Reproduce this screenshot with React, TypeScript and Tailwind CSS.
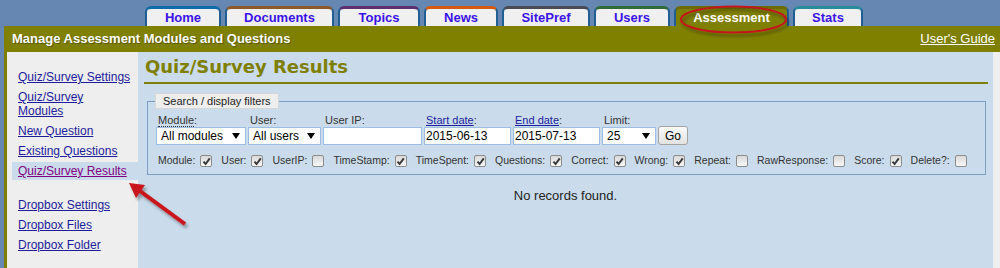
import React from "react";

const tabs = [
  { label: "Home", cls: "w-[76px] border-t-[#0e6aa8]" },
  { label: "Documents", cls: "w-[109px] border-t-[#8b5a2b]" },
  { label: "Topics", cls: "w-[82px] border-t-[#5c2f6e]" },
  { label: "News", cls: "w-[74px] border-t-[#d35a0e]" },
  { label: "SitePref", cls: "w-[88px] border-t-[#4a4a55]" },
  { label: "Users", cls: "w-[76px] border-t-[#2f6b3a]" },
  { label: "Assessment", cls: "w-[115px] border-t-[#6b6b00]", active: true },
  { label: "Stats", cls: "w-[70px] border-t-[#2a8c9a]" },
];

const sideLinks = [
  ["Quiz/Survey Settings"],
  ["Quiz/Survey", "Modules"],
  ["New Question"],
  ["Existing Questions"],
];

const checks: [string, boolean][] = [
  ["Module:", true],
  ["User:", true],
  ["UserIP:", false],
  ["TimeStamp:", true],
  ["TimeSpent:", true],
  ["Questions:", true],
  ["Correct:", true],
  ["Wrong:", true],
  ["Repeat:", false],
  ["RawResponse:", false],
  ["Score:", true],
  ["Delete?:", false],
];

function Check({ on }: { on: boolean }) {
  return (
    <span className="ml-[5px] inline-flex h-[12px] w-[12px] items-center justify-center rounded-[2px] border border-[#8c8c8c] bg-linear-to-b from-[#d9d9d9] to-[#f8f8f8]">
      {on && (
        <svg viewBox="0 0 10 10" className="h-[9px] w-[9px]">
          <path d="M1.6 5.2 L4 7.8 L8.6 1.6" stroke="#3a3a3a" strokeWidth="2.2" fill="none" />
        </svg>
      )}
    </span>
  );
}

function Arrow() {
  return (
    <svg viewBox="0 0 8 6" className="h-[6px] w-[8px]">
      <path d="M0 0 H8 L4 6 Z" fill="#000" />
    </svg>
  );
}

function Select({ text, w }: { text: string; w: string }) {
  return (
    <div className={`flex h-[18px] items-center justify-between border border-[#9ebde3] bg-white pl-[4px] pr-[5px] text-[12px] text-black ${w}`}>
      <span>{text}</span>
      <Arrow />
    </div>
  );
}

function Field({ label, children }: { label: React.ReactNode; children: React.ReactNode }) {
  return (
    <div className="flex flex-col">
      <div className="h-[13px] pl-[2px] text-[11px] leading-[13px] text-[#333]">{label}</div>
      {children}
    </div>
  );
}

export default function App() {
  return (
    <div className="relative h-[268px] w-[1000px] overflow-hidden bg-[#6787b3] font-['Liberation_Sans',Arial,sans-serif]">
      <nav className="flex h-[26px] items-end gap-[4px] pl-[145px]">
        {tabs.map((t) => (
          <div
            key={t.label}
            className={`flex h-[20px] items-center justify-center rounded-t-[6px] border-x-2 border-t-[3px] border-x-[#1f5f93] text-[13px] font-bold ${t.cls} ${
              t.active ? "bg-[#808000] text-white" : "bg-[#f0f0f0] text-[#3b12e8]"
            }`}
          >
            {t.label}
          </div>
        ))}
      </nav>

      <div className="ml-[4px] bg-[#808000]">
        <header className="flex h-[26px] items-center justify-between pl-[8px] pr-[5px] text-[13px] text-white">
          <span className="font-bold [text-shadow:1px_1px_1px_rgba(0,0,0,0.35)]">Manage Assessment Modules and Questions</span>
          <a className="underline">User's Guide</a>
        </header>

        <div className="flex h-[216px] pl-[3px]">
          <aside className="flex w-[131px] flex-col gap-[2px] bg-[#eeeeee] pt-[16px] text-[12px] leading-[14px]">
            {sideLinks.map((l) => (
              <a key={l.join(" ")} className="ml-[5px] py-[2px] pl-[6px] text-[#1c1c9c] underline">
                {l[0]}
                {l[1] && (
                  <>
                    <br />
                    {l[1]}
                  </>
                )}
              </a>
            ))}
            <a className="ml-[5px] bg-[#cadcec] py-[2px] pl-[6px] text-[#800080] underline">Quiz/Survey Results</a>
            <div className="mt-[14px] flex flex-col gap-[2px]">
              {["Dropbox Settings", "Dropbox Files", "Dropbox Folder"].map((l) => (
                <a key={l} className="ml-[5px] py-[2px] pl-[6px] text-[#1c1c9c] underline">
                  {l}
                </a>
              ))}
            </div>
          </aside>

          <main className="flex-1 bg-[#cadcec]">
            <h1 className="ml-[6px] mr-[5px] border-b-2 border-[#808000] pb-[4px] pl-[1px] pt-[4px] font-['DejaVu_Sans',Verdana,sans-serif] text-[18px] font-bold leading-[22px] text-[#808000]">
              Quiz/Survey Results
            </h1>

            <fieldset className="ml-[9px] mr-[7px] mt-[9px] border border-[#7f9dc0] px-[8px] pb-[6px] pt-[5px]">
              <legend className="-ml-[1px] h-[16px] border border-[#d6d6d6] bg-[#eeeeee] px-[7px] text-[11px] leading-[14px] text-[#222]">
                Search / display filters
              </legend>

              <div className="flex gap-[2px]">
                <Field label={<><abbr className="no-underline border-b border-dotted border-[#333]">Module</abbr>:</>}>
                  <Select text="All modules" w="w-[90px]" />
                </Field>
                <Field label="User:">
                  <Select text="All users" w="w-[73px]" />
                </Field>
                <Field label="User IP:">
                  <div className="h-[18px] w-[99px] border border-[#9ebde3] bg-white" />
                </Field>
                <Field label={<><a className="text-[#1c1c9c] underline">Start date</a>:</>}>
                  <div className="h-[18px] w-[87px] border border-[#9ebde3] bg-white pl-[1px] text-[12px] leading-[16px] text-black">2015-06-13</div>
                </Field>
                <Field label={<><a className="text-[#1c1c9c] underline">End date</a>:</>}>
                  <div className="h-[18px] w-[87px] border border-[#9ebde3] bg-white pl-[1px] text-[12px] leading-[16px] text-black">2015-07-13</div>
                </Field>
                <Field label="Limit:">
                  <Select text="25" w="w-[54px]" />
                </Field>
                <div className="flex flex-col justify-end">
                  <button className="h-[19px] w-[30px] rounded-[3px] border border-[#a3a3a3] bg-linear-to-b from-[#fafafa] to-[#e2e2e2] text-[12px] text-black">
                    Go
                  </button>
                </div>
              </div>

              <div className="mt-[9px] flex h-[14px] items-center gap-[9px] pl-[2px] text-[10.5px] text-[#333]">
                {checks.map(([l, on]) => (
                  <span key={l} className="flex items-center">
                    {l}
                    <Check on={on} />
                  </span>
                ))}
              </div>
            </fieldset>

            <p className="mt-[13px] text-center text-[13px] leading-[16px] text-[#222]">No records found.</p>
          </main>

          <div className="w-[7px] bg-[#eeeeee]" />
        </div>
      </div>

      <svg className="pointer-events-none absolute left-0 top-0" width="1000" height="268">
        <defs>
          <filter id="sh" x="-20%" y="-20%" width="140%" height="160%">
            <feDropShadow dx="2" dy="3" stdDeviation="1.5" floodColor="#000" floodOpacity="0.35" />
          </filter>
        </defs>
        <ellipse cx="733.5" cy="19.5" rx="52.5" ry="13" fill="none" stroke="#c3161c" strokeWidth="2" filter="url(#sh)" />
        <g filter="url(#sh)">
          <line x1="185" y1="224" x2="140" y2="191" stroke="#c8141a" strokeWidth="4" />
          <polygon points="129,183 145,185 136,198" fill="#c8141a" />
        </g>
      </svg>
    </div>
  );
}
